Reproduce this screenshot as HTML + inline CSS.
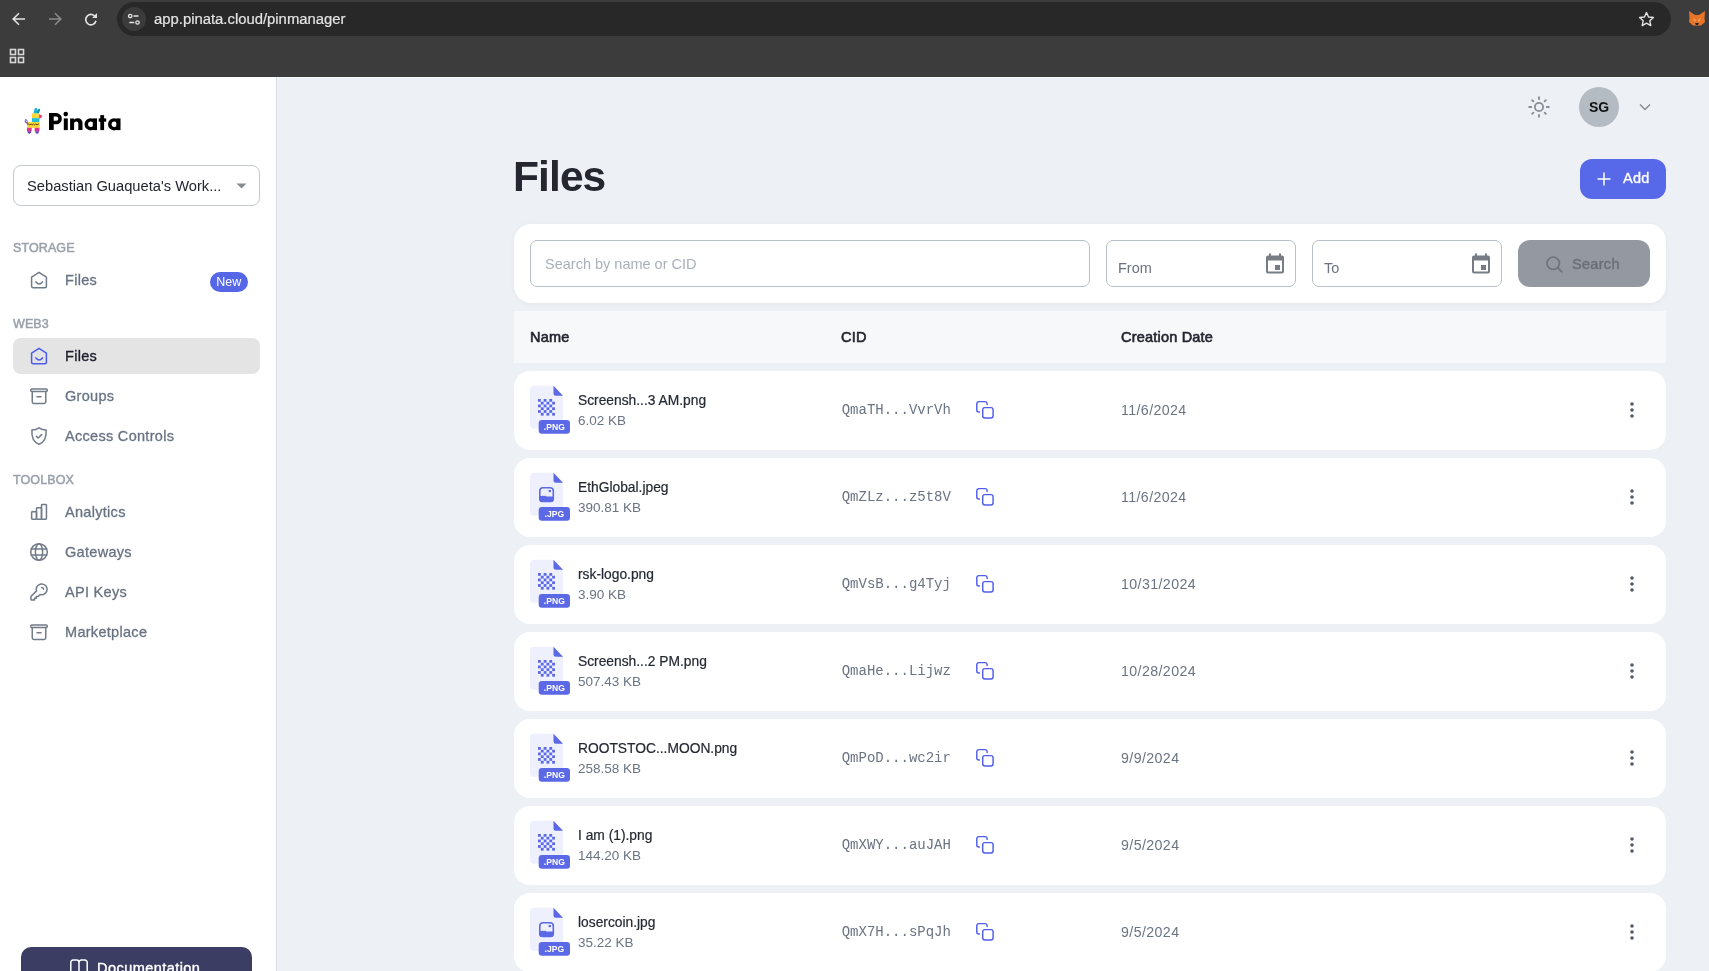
<!DOCTYPE html>
<html><head><meta charset="utf-8">
<style>
*{box-sizing:border-box;margin:0;padding:0}
html,body{width:1709px;height:971px;overflow:hidden;background:#edf1f5;font-family:"Liberation Sans",sans-serif}
#chrome,#side,#main{will-change:transform}
.a{position:absolute}
#chrome{position:absolute;left:0;top:0;width:1709px;height:77px;background:#3c3c3c}
#url{position:absolute;left:117px;top:2px;width:1554px;height:34px;border-radius:17px;background:#282828}
#side{position:absolute;left:0;top:77px;width:277px;height:894px;background:#fff;border-right:1px solid #dcdee3}
.sec{position:absolute;left:13px;font-size:12.5px;color:#9aa1ab;-webkit-text-stroke:0.5px #9aa1ab;letter-spacing:0.1px;line-height:14px;margin-top:1px}
.item{position:absolute;left:13px;width:247px;height:36px;border-radius:8px}
.item svg{position:absolute;left:14px;top:6px}
.item span{position:absolute;left:52px;top:0;line-height:36px;font-size:14.5px;color:#687382;letter-spacing:0.3px;-webkit-text-stroke:0.3px #687382}
.item.act{background:#e4e4e5}
.item.act span{color:#1c1f2a;-webkit-text-stroke:0.35px #1c1f2a}
.row{position:absolute;left:514px;width:1152px;height:79px;background:#fff;border-radius:16px}
.doc{position:absolute;left:16px;top:14px;width:41px;height:49px}
.fname{position:absolute;left:64px;top:21.5px;font-size:13.8px;line-height:16px;color:#252933;white-space:nowrap;-webkit-text-stroke:0.2px #252933}
.fsize{position:absolute;left:64px;top:42px;font-size:13.5px;line-height:16px;color:#6b7482;white-space:nowrap}
.cid{position:absolute;left:327.7px;top:30px;font-family:"Liberation Mono",monospace;font-size:14px;line-height:18px;color:#6b7482}
.copy{position:absolute;left:461px;top:29px}
.date{position:absolute;left:607px;top:30.5px;font-size:14.2px;letter-spacing:0.4px;line-height:16px;color:#6b7482}
.kebab{position:absolute;left:1116px;top:31px}
.inp{position:absolute;border:1px solid #b9bfc8;border-radius:7px;background:#fff}
</style></head><body>
<div id="chrome">
  <svg class="a" style="left:9px;top:9px" width="20" height="20" viewBox="0 0 20 20"><path d="M16 10H4.5M10 4.2L4.2 10L10 15.8" fill="none" stroke="#e3e3e3" stroke-width="1.6"/></svg>
  <svg class="a" style="left:45px;top:9px" width="20" height="20" viewBox="0 0 20 20"><path d="M4 10H15.5M10 4.2L15.8 10L10 15.8" fill="none" stroke="#8a8a8a" stroke-width="1.6"/></svg>
  <svg class="a" style="left:81px;top:9px" width="20" height="20" viewBox="0 0 20 20"><path d="M14.6 8.3A5.2 5.2 0 1 0 15 11.8" fill="none" stroke="#e3e3e3" stroke-width="1.6"/><path d="M16 4.1V8.9H11.2Z" fill="#e3e3e3"/></svg>
  <div id="url">
    <div class="a" style="left:5px;top:5px;width:24px;height:24px;border-radius:12px;background:#3b3b3b"></div>
    <svg class="a" style="left:10px;top:10px" width="14" height="14" viewBox="0 0 14 14"><circle cx="3.2" cy="4" r="1.7" fill="none" stroke="#e3e3e3" stroke-width="1.3"/><path d="M6.5 4H11.5M2.3 10.5H7.2" stroke="#e3e3e3" stroke-width="1.3"/><circle cx="10.5" cy="10.5" r="1.7" fill="none" stroke="#e3e3e3" stroke-width="1.3"/></svg>
    <div class="a" style="left:37px;top:0;line-height:34px;font-size:14.85px;color:#e3e3e3;-webkit-text-stroke:0.2px #e3e3e3">app.pinata.cloud/pinmanager</div>
    <svg class="a" style="left:1520px;top:8px" width="19" height="19" viewBox="0 0 24 24"><path d="M12 3.2l2.6 5.6 6.1.7-4.5 4.2 1.2 6-5.4-3-5.4 3 1.2-6-4.5-4.2 6.1-.7z" fill="none" stroke="#e3e3e3" stroke-width="1.8" stroke-linejoin="round"/></svg>
  </div>
  <svg class="a" style="left:1688px;top:10px" width="18" height="17" viewBox="0 0 18 17"><path d="M1 1L7 5H11L17 1L16.5 8L17 12L13 15.5H5L1 12L1.5 8Z" fill="#e8742a"/><path d="M5 8L8 10L7 12ZM13 8L10 10L11 12Z" fill="#f6a45c"/><path d="M7 13H11L10 15H8Z" fill="#2a2a2a"/></svg>
  <svg class="a" style="left:9px;top:48px" width="17" height="17" viewBox="0 0 17 17"><g fill="none" stroke="#d8d8d8" stroke-width="1.6"><rect x="1.5" y="1.5" width="5" height="5"/><rect x="9.5" y="1.5" width="5" height="5"/><rect x="1.5" y="9.5" width="5" height="5"/><rect x="9.5" y="9.5" width="5" height="5"/></g></svg>
</div>
<div id="side">
  <svg class="a" style="left:24px;top:30px" width="20" height="28" viewBox="0 0 20 28">
    <path d="M9.3 6.6L10.8 1.2L12.9 0.9L13.3 3.6L15 1.5L16.2 2.3L14.6 6.6Z" fill="#1bb3cf"/>
    <path d="M13.8 2.5L16.2 2.3L14.6 6.6H13.2Z" fill="#0f8fa6"/>
    <rect x="7.9" y="6.5" width="7.4" height="4.6" fill="#fcd535"/>
    <circle cx="13.2" cy="8.1" r="0.7" fill="#fff"/>
    <path d="M15.2 7.3Q18.3 8.3 18.1 9.5Q17.2 11.6 15.2 11.7Z" fill="#e3338f"/>
    <rect x="7.9" y="11.1" width="7.4" height="4" fill="#22bfd9"/>
    <rect x="3" y="15" width="12.6" height="5.8" fill="#fcd535"/>
    <path d="M3.4 17.6L4.6 17L5.8 17.8L7 17L8.2 17.8L9.4 17L10.6 17.8L11.8 17L13 17.8L14.2 17L15.2 17.6" stroke="#3a2a1a" stroke-width="0.8" fill="none"/>
    <path d="M3.6 16.6C1.2 15.8 0.8 14.2 1.6 12.4M3.4 15.4L1.3 14.8M3.3 14.2L2.4 12.8" stroke="#7247c4" stroke-width="1" fill="none" stroke-linecap="round"/>
    <rect x="3" y="20.8" width="4.7" height="3.4" fill="#e0318d"/>
    <rect x="10.7" y="20.8" width="4.7" height="3.4" fill="#e0318d"/>
    <path d="M3.3 24.2H7.4L6.8 26Q5.4 27.4 4 26Z M11 24.2H15.1L14.5 26Q13.1 27.4 11.7 26Z" fill="#6236b8"/>
  </svg>
  <svg class="a" style="left:46px;top:29px" width="80" height="30" viewBox="0 0 80 30" fill="#000">
    <path fill-rule="evenodd" d="M3 7H10.2A5.65 5.65 0 0 1 10.2 18.3H7.7V24.1H3ZM7.7 10.6V14.8H10.2A2.1 2.1 0 0 0 10.2 10.6Z"/>
    <rect x="17.8" y="12.4" width="4" height="11.7"/><circle cx="19.75" cy="8.1" r="2.3"/>
    <path d="M24.1 24.1V12.4H28.1V13.6Q29.6 12.2 31.9 12.2A4.6 4.6 0 0 1 36.5 16.8V24.1H32.3V17.6A2.1 2.1 0 0 0 28.1 17.6V24.1Z"/>
    <path fill-rule="evenodd" d="M44.6 12.2A6.1 6.1 0 1 0 44.6 24.4A6.1 6.1 0 1 0 44.6 12.2ZM44.8 15.6A2.7 2.7 0 1 1 44.8 21A2.7 2.7 0 1 1 44.8 15.6Z"/>
    <rect x="46.8" y="12.4" width="4.2" height="11.7"/>
    <rect x="54.3" y="9.1" width="3.8" height="15"/><rect x="52.7" y="12.4" width="7.5" height="3.3"/>
    <path fill-rule="evenodd" d="M68.1 12.2A6.1 6.1 0 1 0 68.1 24.4A6.1 6.1 0 1 0 68.1 12.2ZM68.3 15.6A2.7 2.7 0 1 1 68.3 21A2.7 2.7 0 1 1 68.3 15.6Z"/>
    <rect x="70.3" y="12.4" width="4.2" height="11.7"/>
  </svg>
  <div class="inp" style="left:13px;top:88px;width:247px;height:41px;border-color:#c4c8cf;border-radius:8px">
    <div class="a" style="left:13px;top:1px;line-height:39px;font-size:14.7px;color:#222530;white-space:nowrap">Sebastian Guaqueta's Work...</div>
    <svg class="a" style="left:222px;top:17px" width="11" height="6" viewBox="0 0 11 6"><path d="M0.5 0.5H10.5L5.5 5.5Z" fill="#868b94"/></svg>
  </div>
    <div class="sec" style="top:163px">STORAGE</div>
  <div class="item" style="top:185px"><svg width="24" height="24" viewBox="0 0 24 24" fill="none" stroke="#727b88" stroke-width="1.5" stroke-linejoin="round" stroke-linecap="round"><path d="M12 4.3L19.4 9.1V18.3A1.5 1.5 0 0 1 17.9 19.8H6.1A1.5 1.5 0 0 1 4.6 18.3V9.1Z"/><path d="M8.9 13.9Q12.2 17.9 15.5 13.9"/></svg><span>Files</span><div class="a" style="left:196.6px;top:10px;width:38.4px;height:20px;border-radius:10px;background:#5567e6;color:#fff;font-size:12.5px;line-height:20px;text-align:center">New</div></div>
  <div class="sec" style="top:239px">WEB3</div>
  <div class="item act" style="top:261px"><svg width="24" height="24" viewBox="0 0 24 24" fill="none" stroke="#4d5ce8" stroke-width="1.5" stroke-linejoin="round" stroke-linecap="round"><path d="M12 4.3L19.4 9.1V18.3A1.5 1.5 0 0 1 17.9 19.8H6.1A1.5 1.5 0 0 1 4.6 18.3V9.1Z"/><path d="M8.9 13.9Q12.2 17.9 15.5 13.9"/></svg><span>Files</span></div>
  <div class="item" style="top:301px"><svg width="24" height="24" viewBox="0 0 24 24" fill="none" stroke="#727b88" stroke-width="1.5" stroke-linejoin="round" stroke-linecap="round"><rect x="3.75" y="4.95" width="16.5" height="2.6" rx="1"/><path d="M5.25 7.6V17.8A1.6 1.6 0 0 0 6.85 19.4H17.15A1.6 1.6 0 0 0 18.75 17.8V7.6"/><path d="M10 12.7H14"/></svg><span>Groups</span></div>
  <div class="item" style="top:341px"><svg width="24" height="24" viewBox="0 0 24 24" fill="none" stroke="#727b88" stroke-width="1.5" stroke-linejoin="round" stroke-linecap="round"><path d="M12 3.8C14.3 5.5 16.6 6.1 19.1 6.1C19.6 13.3 16.6 18.5 12 20.2C7.4 18.5 4.4 13.3 4.9 6.1C7.4 6.1 9.7 5.5 12 3.8Z"/><path d="M9.4 12.2L11.2 14L14.6 10.6"/></svg><span>Access Controls</span></div>
  <div class="sec" style="top:395px">TOOLBOX</div>
  <div class="item" style="top:417px"><svg width="24" height="24" viewBox="0 0 24 24" fill="none" stroke="#727b88" stroke-width="1.5" stroke-linejoin="round" stroke-linecap="round"><rect x="4.65" y="11.8" width="4.85" height="7.45" rx="0.7"/><rect x="9.5" y="7.8" width="5" height="11.45" rx="0.7"/><rect x="14.5" y="4.55" width="4.95" height="14.7" rx="0.7"/></svg><span>Analytics</span></div>
  <div class="item" style="top:457px"><svg width="24" height="24" viewBox="0 0 24 24" fill="none" stroke="#727b88" stroke-width="1.5" stroke-linejoin="round" stroke-linecap="round"><circle cx="12" cy="12" r="8.3"/><path d="M4.2 9H19.8M4.2 15H19.8"/><ellipse cx="12" cy="12" rx="3.6" ry="8.3"/></svg><span>Gateways</span></div>
  <div class="item" style="top:497px"><svg width="24" height="24" viewBox="0 0 24 24" fill="none" stroke="#727b88" stroke-width="1.5" stroke-linejoin="round" stroke-linecap="round"><g transform="translate(12 12) scale(0.9) translate(-12 -12)"><path stroke-width="1.7" d="M15 7a2 2 0 012 2m4 0a6 6 0 01-7.743 5.743L11 17H9v2H7v2H4a1 1 0 01-1-1v-2.586a1 1 0 01.293-.707l5.964-5.964A6 6 0 1121 9z"/></g></svg><span>API Keys</span></div>
  <div class="item" style="top:537px"><svg width="24" height="24" viewBox="0 0 24 24" fill="none" stroke="#727b88" stroke-width="1.5" stroke-linejoin="round" stroke-linecap="round"><rect x="3.75" y="4.95" width="16.5" height="2.6" rx="1"/><path d="M5.25 7.6V17.8A1.6 1.6 0 0 0 6.85 19.4H17.15A1.6 1.6 0 0 0 18.75 17.8V7.6"/><path d="M10 12.7H14"/></svg><span>Marketplace</span></div>
  <div class="a" style="left:21px;top:870px;width:231px;height:50px;border-radius:10px;background:#3b3d62">
    <svg class="a" style="left:48px;top:12px" width="20" height="18" viewBox="0 0 20 18" fill="none" stroke="#fff" stroke-width="1.5" stroke-linejoin="round"><path d="M1.8 17V3.3A2.3 2.3 0 0 1 4.1 1H7.7A2.3 2.3 0 0 1 10 3.3V17"/><path d="M10 3.3A2.3 2.3 0 0 1 12.3 1H15.9A2.3 2.3 0 0 1 18.2 3.3V17"/></svg>
    <div class="a" style="left:76px;top:12px;font-size:14.5px;line-height:18px;color:#fff;letter-spacing:0.45px;-webkit-text-stroke:0.4px #fff">Documentation</div>
  </div>
</div>
<div class="a" style="left:277px;top:77px;width:1432px;height:1px;background:#f4f8fb"></div>
<div id="main" class="a" style="left:0;top:77px;width:1709px;height:894px">
  <svg class="a" style="left:1527px;top:18px" width="24" height="24" viewBox="0 0 24 24" fill="none" stroke="#878c95" stroke-width="1.8" stroke-linecap="round"><circle cx="12" cy="12" r="4.1"/><path d="M12 2.2V4.2M12 19.8V21.8M2.2 12H4.2M19.8 12H21.8M5.1 5.1L6.4 6.4M17.6 17.6L18.9 18.9M5.1 18.9L6.4 17.6M17.6 6.4L18.9 5.1"/></svg>
  <div class="a" style="left:1579px;top:10px;width:40px;height:40px;border-radius:20px;background:#b5bbc3;text-align:center;line-height:40px;font-size:14px;font-weight:700;color:#111">SG</div>
  <svg class="a" style="left:1639px;top:26px" width="12" height="8" viewBox="0 0 12 8" fill="none" stroke="#878c95" stroke-width="1.5"><path d="M1 1.5L6 6.5L11 1.5"/></svg>
  <div class="a" style="left:513px;top:74.5px;font-size:42.5px;line-height:50px;font-weight:700;color:#252630;letter-spacing:-0.9px">Files</div>
  <div class="a" style="left:1580px;top:82px;width:86px;height:40px;border-radius:12px;background:#5768e8">
    <svg class="a" style="left:17px;top:13px" width="14" height="14" viewBox="0 0 14 14" stroke="#fff" stroke-width="1.5"><path d="M7 0.5V13.5M0.5 7H13.5"/></svg>
    <div class="a" style="left:43px;top:-0.7px;line-height:40px;font-size:14.5px;color:#fff;letter-spacing:0.3px;-webkit-text-stroke:0.35px #fff">Add</div>
  </div>
  <div class="a" style="left:514px;top:147px;width:1152px;height:79px;border-radius:17px;background:#fff;box-shadow:0 1px 5px rgba(30,40,60,0.05)">
    <div class="inp" style="left:16px;top:16px;width:560px;height:47px;border-radius:7px">
      <div class="a" style="left:14px;top:1px;line-height:45px;font-size:14.5px;color:#abb0b8">Search by name or CID</div>
    </div>
    <div class="inp" style="left:592px;top:16px;width:190px;height:47px">
      <div class="a" style="left:11px;top:18px;line-height:18px;font-size:14.5px;color:#6b7280">From</div>
      <svg class="a" style="left:158px;top:12px" width="20" height="22" viewBox="0 0 20 22" fill="#777c85"><path d="M4 0.5H6V2.5H14V0.5H16V2.5H17A2 2 0 0 1 19 4.5V18.5A2 2 0 0 1 17 20.5H3A2 2 0 0 1 1 18.5V4.5A2 2 0 0 1 3 2.5H4ZM3 7.5V18.5H17V7.5Z"/><rect x="10" y="12" width="5" height="5"/></svg>
    </div>
    <div class="inp" style="left:798px;top:16px;width:190px;height:47px">
      <div class="a" style="left:11px;top:18px;line-height:18px;font-size:14.5px;color:#6b7280">To</div>
      <svg class="a" style="left:158px;top:12px" width="20" height="22" viewBox="0 0 20 22" fill="#777c85"><path d="M4 0.5H6V2.5H14V0.5H16V2.5H17A2 2 0 0 1 19 4.5V18.5A2 2 0 0 1 17 20.5H3A2 2 0 0 1 1 18.5V4.5A2 2 0 0 1 3 2.5H4ZM3 7.5V18.5H17V7.5Z"/><rect x="10" y="12" width="5" height="5"/></svg>
    </div>
    <div class="a" style="left:1004px;top:16px;width:132px;height:47px;border-radius:12px;background:#9499a1">
      <svg class="a" style="left:27px;top:15px" width="19" height="19" viewBox="0 0 19 19" fill="none" stroke="#6f747c" stroke-width="1.7" stroke-linecap="round"><circle cx="8.2" cy="8.2" r="6.2"/><path d="M12.8 12.8L16.8 16.8"/></svg>
      <div class="a" style="left:54px;top:1px;line-height:47px;font-size:14.5px;color:#666b73;letter-spacing:0.3px;-webkit-text-stroke:0.45px #6f747c">Search</div>
    </div>
  </div>
  <div class="a" style="left:514px;top:234px;width:1152px;height:52px;background:#f7f8fa">
    <div class="a" style="left:16px;top:0;line-height:52px;font-size:14.5px;color:#23262f;letter-spacing:0.2px;-webkit-text-stroke:0.6px #23262f">Name</div>
    <div class="a" style="left:327px;top:0;line-height:52px;font-size:14.5px;color:#23262f;letter-spacing:0.2px;-webkit-text-stroke:0.6px #23262f">CID</div>
    <div class="a" style="left:607px;top:0;line-height:52px;font-size:14.5px;color:#23262f;letter-spacing:0.2px;-webkit-text-stroke:0.6px #23262f">Creation Date</div>
  </div>
<div class="row" style="top:294px"><svg class="doc" width="41" height="49" viewBox="0 0 41 49"><path d="M4 0.8H23.5L33 10.8V39.7A4 4 0 0 1 29 43.7H4A4 4 0 0 1 0 39.7V4.8A4 4 0 0 1 4 0.8Z" fill="#eef0fd"/><path d="M23.5 0.8L33 10.8H26A2.5 2.5 0 0 1 23.5 8.3Z" fill="#5b69e6"/><g fill="#5b69e6" transform="translate(8,14)"><rect x="0.00" y="0.00" width="2.83" height="2.77"/><rect x="5.66" y="0.00" width="2.83" height="2.77"/><rect x="11.32" y="0.00" width="2.83" height="2.77"/><rect x="2.83" y="2.77" width="2.83" height="2.77"/><rect x="8.49" y="2.77" width="2.83" height="2.77"/><rect x="14.15" y="2.77" width="2.83" height="2.77"/><rect x="0.00" y="5.54" width="2.83" height="2.77"/><rect x="5.66" y="5.54" width="2.83" height="2.77"/><rect x="11.32" y="5.54" width="2.83" height="2.77"/><rect x="2.83" y="8.31" width="2.83" height="2.77"/><rect x="8.49" y="8.31" width="2.83" height="2.77"/><rect x="14.15" y="8.31" width="2.83" height="2.77"/><rect x="0.00" y="11.08" width="2.83" height="2.77"/><rect x="5.66" y="11.08" width="2.83" height="2.77"/><rect x="11.32" y="11.08" width="2.83" height="2.77"/><rect x="2.83" y="13.85" width="2.83" height="2.77"/><rect x="8.49" y="13.85" width="2.83" height="2.77"/><rect x="14.15" y="13.85" width="2.83" height="2.77"/></g><rect x="8.7" y="35" width="31.3" height="13.8" rx="3.2" fill="#5b69e6"/><text x="24.35" y="45.2" text-anchor="middle" font-family="Liberation Sans" font-weight="700" font-size="8.6" fill="#fff">.PNG</text></svg><div class="fname">Screensh...3 AM.png</div><div class="fsize">6.02 KB</div><div class="cid">QmaTH...VvrVh</div><svg class="copy" width="20" height="20" viewBox="0 0 20 20" fill="none" stroke="#4f5de8" stroke-width="1.45" stroke-linecap="round" stroke-linejoin="round"><path d="M12.1 4.4V3.6A2 2 0 0 0 10.1 1.6H3.8A2 2 0 0 0 1.8 3.6V9.9A2 2 0 0 0 3.8 11.9H4.4"/><rect x="7.7" y="7.6" width="10.4" height="10.3" rx="2.2"/></svg><div class="date">11/6/2024</div><svg class="kebab" width="4" height="16" viewBox="0 0 4 16" fill="#525b68"><circle cx="2" cy="2" r="1.8"/><circle cx="2" cy="8" r="1.8"/><circle cx="2" cy="14" r="1.8"/></svg></div>
<div class="row" style="top:381px"><svg class="doc" width="41" height="49" viewBox="0 0 41 49"><path d="M4 0.8H23.5L33 10.8V39.7A4 4 0 0 1 29 43.7H4A4 4 0 0 1 0 39.7V4.8A4 4 0 0 1 4 0.8Z" fill="#eef0fd"/><path d="M23.5 0.8L33 10.8H26A2.5 2.5 0 0 1 23.5 8.3Z" fill="#5b69e6"/><rect x="9.8" y="2" width="13.5" height="13.5" rx="3.2" fill="none" stroke="#5b69e6" stroke-width="1.6" transform="translate(0,13.8)" /><path transform="translate(0,13.8)" d="M9 10.2H12L12.8 9.6L14 10.4L15.2 9.7L16.5 10.6H24V13A3.5 3.5 0 0 1 20.5 16.5H12.5A3.5 3.5 0 0 1 9 13Z" fill="#5b69e6"/><circle cx="19.8" cy="19.0" r="1.3" fill="#5b69e6"/><rect x="8.7" y="35" width="31.3" height="13.8" rx="3.2" fill="#5b69e6"/><text x="24.35" y="45.2" text-anchor="middle" font-family="Liberation Sans" font-weight="700" font-size="8.6" fill="#fff">.JPG</text></svg><div class="fname">EthGlobal.jpeg</div><div class="fsize">390.81 KB</div><div class="cid">QmZLz...z5t8V</div><svg class="copy" width="20" height="20" viewBox="0 0 20 20" fill="none" stroke="#4f5de8" stroke-width="1.45" stroke-linecap="round" stroke-linejoin="round"><path d="M12.1 4.4V3.6A2 2 0 0 0 10.1 1.6H3.8A2 2 0 0 0 1.8 3.6V9.9A2 2 0 0 0 3.8 11.9H4.4"/><rect x="7.7" y="7.6" width="10.4" height="10.3" rx="2.2"/></svg><div class="date">11/6/2024</div><svg class="kebab" width="4" height="16" viewBox="0 0 4 16" fill="#525b68"><circle cx="2" cy="2" r="1.8"/><circle cx="2" cy="8" r="1.8"/><circle cx="2" cy="14" r="1.8"/></svg></div>
<div class="row" style="top:468px"><svg class="doc" width="41" height="49" viewBox="0 0 41 49"><path d="M4 0.8H23.5L33 10.8V39.7A4 4 0 0 1 29 43.7H4A4 4 0 0 1 0 39.7V4.8A4 4 0 0 1 4 0.8Z" fill="#eef0fd"/><path d="M23.5 0.8L33 10.8H26A2.5 2.5 0 0 1 23.5 8.3Z" fill="#5b69e6"/><g fill="#5b69e6" transform="translate(8,14)"><rect x="0.00" y="0.00" width="2.83" height="2.77"/><rect x="5.66" y="0.00" width="2.83" height="2.77"/><rect x="11.32" y="0.00" width="2.83" height="2.77"/><rect x="2.83" y="2.77" width="2.83" height="2.77"/><rect x="8.49" y="2.77" width="2.83" height="2.77"/><rect x="14.15" y="2.77" width="2.83" height="2.77"/><rect x="0.00" y="5.54" width="2.83" height="2.77"/><rect x="5.66" y="5.54" width="2.83" height="2.77"/><rect x="11.32" y="5.54" width="2.83" height="2.77"/><rect x="2.83" y="8.31" width="2.83" height="2.77"/><rect x="8.49" y="8.31" width="2.83" height="2.77"/><rect x="14.15" y="8.31" width="2.83" height="2.77"/><rect x="0.00" y="11.08" width="2.83" height="2.77"/><rect x="5.66" y="11.08" width="2.83" height="2.77"/><rect x="11.32" y="11.08" width="2.83" height="2.77"/><rect x="2.83" y="13.85" width="2.83" height="2.77"/><rect x="8.49" y="13.85" width="2.83" height="2.77"/><rect x="14.15" y="13.85" width="2.83" height="2.77"/></g><rect x="8.7" y="35" width="31.3" height="13.8" rx="3.2" fill="#5b69e6"/><text x="24.35" y="45.2" text-anchor="middle" font-family="Liberation Sans" font-weight="700" font-size="8.6" fill="#fff">.PNG</text></svg><div class="fname">rsk-logo.png</div><div class="fsize">3.90 KB</div><div class="cid">QmVsB...g4Tyj</div><svg class="copy" width="20" height="20" viewBox="0 0 20 20" fill="none" stroke="#4f5de8" stroke-width="1.45" stroke-linecap="round" stroke-linejoin="round"><path d="M12.1 4.4V3.6A2 2 0 0 0 10.1 1.6H3.8A2 2 0 0 0 1.8 3.6V9.9A2 2 0 0 0 3.8 11.9H4.4"/><rect x="7.7" y="7.6" width="10.4" height="10.3" rx="2.2"/></svg><div class="date">10/31/2024</div><svg class="kebab" width="4" height="16" viewBox="0 0 4 16" fill="#525b68"><circle cx="2" cy="2" r="1.8"/><circle cx="2" cy="8" r="1.8"/><circle cx="2" cy="14" r="1.8"/></svg></div>
<div class="row" style="top:555px"><svg class="doc" width="41" height="49" viewBox="0 0 41 49"><path d="M4 0.8H23.5L33 10.8V39.7A4 4 0 0 1 29 43.7H4A4 4 0 0 1 0 39.7V4.8A4 4 0 0 1 4 0.8Z" fill="#eef0fd"/><path d="M23.5 0.8L33 10.8H26A2.5 2.5 0 0 1 23.5 8.3Z" fill="#5b69e6"/><g fill="#5b69e6" transform="translate(8,14)"><rect x="0.00" y="0.00" width="2.83" height="2.77"/><rect x="5.66" y="0.00" width="2.83" height="2.77"/><rect x="11.32" y="0.00" width="2.83" height="2.77"/><rect x="2.83" y="2.77" width="2.83" height="2.77"/><rect x="8.49" y="2.77" width="2.83" height="2.77"/><rect x="14.15" y="2.77" width="2.83" height="2.77"/><rect x="0.00" y="5.54" width="2.83" height="2.77"/><rect x="5.66" y="5.54" width="2.83" height="2.77"/><rect x="11.32" y="5.54" width="2.83" height="2.77"/><rect x="2.83" y="8.31" width="2.83" height="2.77"/><rect x="8.49" y="8.31" width="2.83" height="2.77"/><rect x="14.15" y="8.31" width="2.83" height="2.77"/><rect x="0.00" y="11.08" width="2.83" height="2.77"/><rect x="5.66" y="11.08" width="2.83" height="2.77"/><rect x="11.32" y="11.08" width="2.83" height="2.77"/><rect x="2.83" y="13.85" width="2.83" height="2.77"/><rect x="8.49" y="13.85" width="2.83" height="2.77"/><rect x="14.15" y="13.85" width="2.83" height="2.77"/></g><rect x="8.7" y="35" width="31.3" height="13.8" rx="3.2" fill="#5b69e6"/><text x="24.35" y="45.2" text-anchor="middle" font-family="Liberation Sans" font-weight="700" font-size="8.6" fill="#fff">.PNG</text></svg><div class="fname">Screensh...2 PM.png</div><div class="fsize">507.43 KB</div><div class="cid">QmaHe...Lijwz</div><svg class="copy" width="20" height="20" viewBox="0 0 20 20" fill="none" stroke="#4f5de8" stroke-width="1.45" stroke-linecap="round" stroke-linejoin="round"><path d="M12.1 4.4V3.6A2 2 0 0 0 10.1 1.6H3.8A2 2 0 0 0 1.8 3.6V9.9A2 2 0 0 0 3.8 11.9H4.4"/><rect x="7.7" y="7.6" width="10.4" height="10.3" rx="2.2"/></svg><div class="date">10/28/2024</div><svg class="kebab" width="4" height="16" viewBox="0 0 4 16" fill="#525b68"><circle cx="2" cy="2" r="1.8"/><circle cx="2" cy="8" r="1.8"/><circle cx="2" cy="14" r="1.8"/></svg></div>
<div class="row" style="top:642px"><svg class="doc" width="41" height="49" viewBox="0 0 41 49"><path d="M4 0.8H23.5L33 10.8V39.7A4 4 0 0 1 29 43.7H4A4 4 0 0 1 0 39.7V4.8A4 4 0 0 1 4 0.8Z" fill="#eef0fd"/><path d="M23.5 0.8L33 10.8H26A2.5 2.5 0 0 1 23.5 8.3Z" fill="#5b69e6"/><g fill="#5b69e6" transform="translate(8,14)"><rect x="0.00" y="0.00" width="2.83" height="2.77"/><rect x="5.66" y="0.00" width="2.83" height="2.77"/><rect x="11.32" y="0.00" width="2.83" height="2.77"/><rect x="2.83" y="2.77" width="2.83" height="2.77"/><rect x="8.49" y="2.77" width="2.83" height="2.77"/><rect x="14.15" y="2.77" width="2.83" height="2.77"/><rect x="0.00" y="5.54" width="2.83" height="2.77"/><rect x="5.66" y="5.54" width="2.83" height="2.77"/><rect x="11.32" y="5.54" width="2.83" height="2.77"/><rect x="2.83" y="8.31" width="2.83" height="2.77"/><rect x="8.49" y="8.31" width="2.83" height="2.77"/><rect x="14.15" y="8.31" width="2.83" height="2.77"/><rect x="0.00" y="11.08" width="2.83" height="2.77"/><rect x="5.66" y="11.08" width="2.83" height="2.77"/><rect x="11.32" y="11.08" width="2.83" height="2.77"/><rect x="2.83" y="13.85" width="2.83" height="2.77"/><rect x="8.49" y="13.85" width="2.83" height="2.77"/><rect x="14.15" y="13.85" width="2.83" height="2.77"/></g><rect x="8.7" y="35" width="31.3" height="13.8" rx="3.2" fill="#5b69e6"/><text x="24.35" y="45.2" text-anchor="middle" font-family="Liberation Sans" font-weight="700" font-size="8.6" fill="#fff">.PNG</text></svg><div class="fname">ROOTSTOC...MOON.png</div><div class="fsize">258.58 KB</div><div class="cid">QmPoD...wc2ir</div><svg class="copy" width="20" height="20" viewBox="0 0 20 20" fill="none" stroke="#4f5de8" stroke-width="1.45" stroke-linecap="round" stroke-linejoin="round"><path d="M12.1 4.4V3.6A2 2 0 0 0 10.1 1.6H3.8A2 2 0 0 0 1.8 3.6V9.9A2 2 0 0 0 3.8 11.9H4.4"/><rect x="7.7" y="7.6" width="10.4" height="10.3" rx="2.2"/></svg><div class="date">9/9/2024</div><svg class="kebab" width="4" height="16" viewBox="0 0 4 16" fill="#525b68"><circle cx="2" cy="2" r="1.8"/><circle cx="2" cy="8" r="1.8"/><circle cx="2" cy="14" r="1.8"/></svg></div>
<div class="row" style="top:729px"><svg class="doc" width="41" height="49" viewBox="0 0 41 49"><path d="M4 0.8H23.5L33 10.8V39.7A4 4 0 0 1 29 43.7H4A4 4 0 0 1 0 39.7V4.8A4 4 0 0 1 4 0.8Z" fill="#eef0fd"/><path d="M23.5 0.8L33 10.8H26A2.5 2.5 0 0 1 23.5 8.3Z" fill="#5b69e6"/><g fill="#5b69e6" transform="translate(8,14)"><rect x="0.00" y="0.00" width="2.83" height="2.77"/><rect x="5.66" y="0.00" width="2.83" height="2.77"/><rect x="11.32" y="0.00" width="2.83" height="2.77"/><rect x="2.83" y="2.77" width="2.83" height="2.77"/><rect x="8.49" y="2.77" width="2.83" height="2.77"/><rect x="14.15" y="2.77" width="2.83" height="2.77"/><rect x="0.00" y="5.54" width="2.83" height="2.77"/><rect x="5.66" y="5.54" width="2.83" height="2.77"/><rect x="11.32" y="5.54" width="2.83" height="2.77"/><rect x="2.83" y="8.31" width="2.83" height="2.77"/><rect x="8.49" y="8.31" width="2.83" height="2.77"/><rect x="14.15" y="8.31" width="2.83" height="2.77"/><rect x="0.00" y="11.08" width="2.83" height="2.77"/><rect x="5.66" y="11.08" width="2.83" height="2.77"/><rect x="11.32" y="11.08" width="2.83" height="2.77"/><rect x="2.83" y="13.85" width="2.83" height="2.77"/><rect x="8.49" y="13.85" width="2.83" height="2.77"/><rect x="14.15" y="13.85" width="2.83" height="2.77"/></g><rect x="8.7" y="35" width="31.3" height="13.8" rx="3.2" fill="#5b69e6"/><text x="24.35" y="45.2" text-anchor="middle" font-family="Liberation Sans" font-weight="700" font-size="8.6" fill="#fff">.PNG</text></svg><div class="fname">I am (1).png</div><div class="fsize">144.20 KB</div><div class="cid">QmXWY...auJAH</div><svg class="copy" width="20" height="20" viewBox="0 0 20 20" fill="none" stroke="#4f5de8" stroke-width="1.45" stroke-linecap="round" stroke-linejoin="round"><path d="M12.1 4.4V3.6A2 2 0 0 0 10.1 1.6H3.8A2 2 0 0 0 1.8 3.6V9.9A2 2 0 0 0 3.8 11.9H4.4"/><rect x="7.7" y="7.6" width="10.4" height="10.3" rx="2.2"/></svg><div class="date">9/5/2024</div><svg class="kebab" width="4" height="16" viewBox="0 0 4 16" fill="#525b68"><circle cx="2" cy="2" r="1.8"/><circle cx="2" cy="8" r="1.8"/><circle cx="2" cy="14" r="1.8"/></svg></div>
<div class="row" style="top:816px"><svg class="doc" width="41" height="49" viewBox="0 0 41 49"><path d="M4 0.8H23.5L33 10.8V39.7A4 4 0 0 1 29 43.7H4A4 4 0 0 1 0 39.7V4.8A4 4 0 0 1 4 0.8Z" fill="#eef0fd"/><path d="M23.5 0.8L33 10.8H26A2.5 2.5 0 0 1 23.5 8.3Z" fill="#5b69e6"/><rect x="9.8" y="2" width="13.5" height="13.5" rx="3.2" fill="none" stroke="#5b69e6" stroke-width="1.6" transform="translate(0,13.8)" /><path transform="translate(0,13.8)" d="M9 10.2H12L12.8 9.6L14 10.4L15.2 9.7L16.5 10.6H24V13A3.5 3.5 0 0 1 20.5 16.5H12.5A3.5 3.5 0 0 1 9 13Z" fill="#5b69e6"/><circle cx="19.8" cy="19.0" r="1.3" fill="#5b69e6"/><rect x="8.7" y="35" width="31.3" height="13.8" rx="3.2" fill="#5b69e6"/><text x="24.35" y="45.2" text-anchor="middle" font-family="Liberation Sans" font-weight="700" font-size="8.6" fill="#fff">.JPG</text></svg><div class="fname">losercoin.jpg</div><div class="fsize">35.22 KB</div><div class="cid">QmX7H...sPqJh</div><svg class="copy" width="20" height="20" viewBox="0 0 20 20" fill="none" stroke="#4f5de8" stroke-width="1.45" stroke-linecap="round" stroke-linejoin="round"><path d="M12.1 4.4V3.6A2 2 0 0 0 10.1 1.6H3.8A2 2 0 0 0 1.8 3.6V9.9A2 2 0 0 0 3.8 11.9H4.4"/><rect x="7.7" y="7.6" width="10.4" height="10.3" rx="2.2"/></svg><div class="date">9/5/2024</div><svg class="kebab" width="4" height="16" viewBox="0 0 4 16" fill="#525b68"><circle cx="2" cy="2" r="1.8"/><circle cx="2" cy="8" r="1.8"/><circle cx="2" cy="14" r="1.8"/></svg></div>
</div>
</body></html>
